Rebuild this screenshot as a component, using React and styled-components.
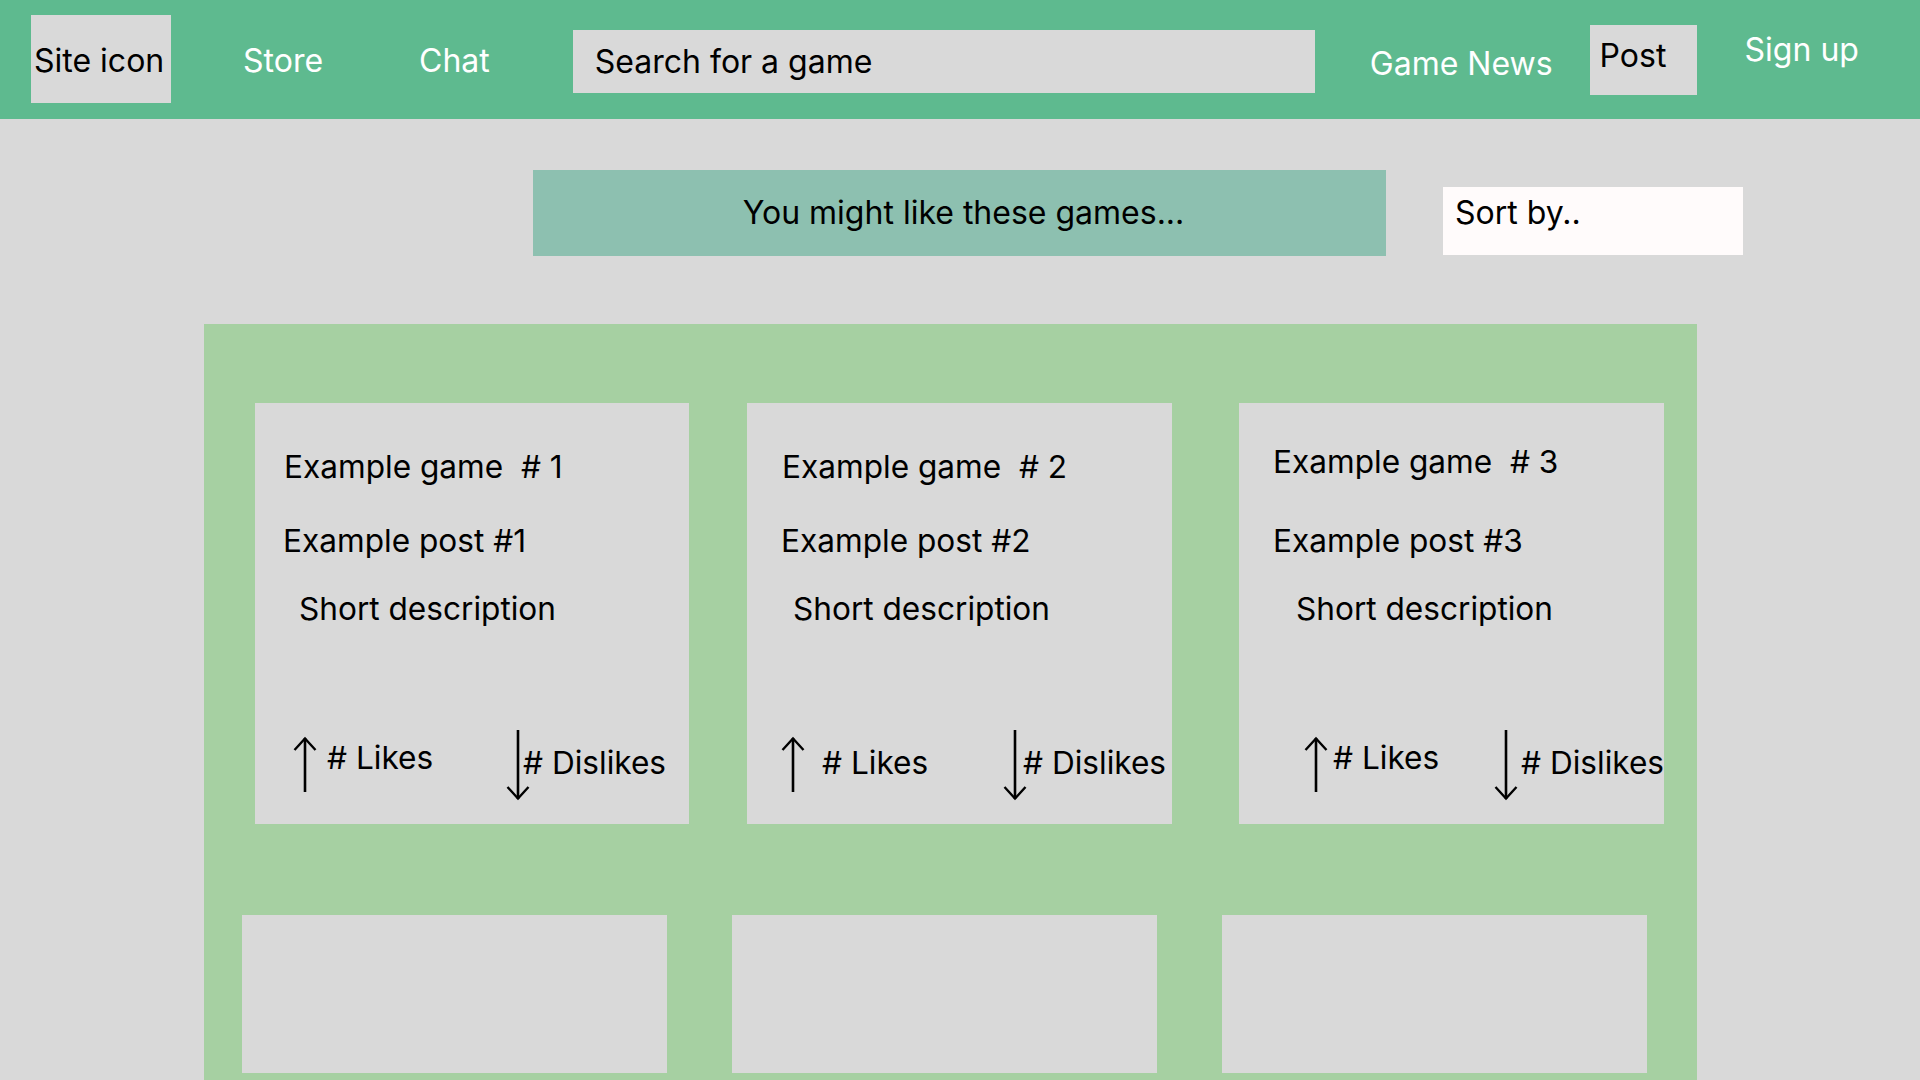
import React from "react";
import styled, { createGlobalStyle } from "styled-components";

const Global = createGlobalStyle`
  html, body { margin: 0; padding: 0; overflow: hidden; }
  body {
    background: #d9d9d9;
    font-family: Inter, "Noto Sans", "Liberation Sans", sans-serif;
    color: #000;
  }
  * { box-sizing: border-box; }
`;

const Page = styled.div`
  width: 1920px;
  height: 1080px;
  overflow: hidden;
  background: #d9d9d9;
`;

const Header = styled.header`
  display: flex;
  align-items: flex-start;
  height: 119px;
  padding-left: 31px;
  background: #5eba8f;
`;

const LogoBox = styled.div`
  display: flex;
  align-items: center;
  margin-top: 15px;
  width: 140px;
  height: 88px;
  padding: 3px 0 0 3px;
  background: #d9d9d9;
  font-size: 32px;
  line-height: 32px;
  white-space: nowrap;
`;

const NavLink = styled.a`
  margin-top: ${(p) => p.$top}px;
  margin-left: ${(p) => p.$ml}px;
  color: #ffffff;
  font-size: 32px;
  line-height: 32px;
  white-space: nowrap;
  text-decoration: none;
`;

const SearchBox = styled.div`
  display: flex;
  align-items: center;
  margin: 30px 0 0 ${(p) => p.$ml}px;
  width: 742px;
  height: 63px;
  padding-left: 22px;
  background: #d9d9d9;
  font-size: 32px;
  line-height: 32px;
`;

const PostButton = styled.div`
  margin: 25px 0 0 ${(p) => p.$ml}px;
  width: 107px;
  height: 70px;
  padding: 15px 0 0 10px;
  background: #d9d9d9;
  font-size: 32px;
  line-height: 32px;
`;

const BannerRow = styled.div`
  display: flex;
  align-items: flex-start;
  gap: 57px;
  padding: 51px 0 0 533px;
`;

const Banner = styled.div`
  display: flex;
  align-items: center;
  justify-content: center;
  width: 853px;
  height: 86px;
  padding-left: 8px;
  background: #8dc0b0;
  font-size: 32px;
  line-height: 32px;
`;

const SortBox = styled.div`
  margin-top: 17px;
  width: 300px;
  height: 68px;
  padding: 10px 12px;
  background: #fffbfb;
  font-size: 32px;
  line-height: 32px;
`;

const Board = styled.section`
  margin: 68px 0 0 204px;
  width: 1493px;
  padding: 79px 0 200px;
  background: #a6d0a2;
`;

const CardRow = styled.div`
  display: flex;
  align-items: flex-start;
  margin-top: ${(p) => p.$mt || 0}px;
`;

const Card = styled.article`
  display: flex;
  flex-direction: column;
  align-items: flex-start;
  margin-left: ${(p) => p.$ml}px;
  width: ${(p) => p.$w}px;
  height: ${(p) => p.$h}px;
  background: #d9d9d9;
`;

const CardLine = styled.div`
  margin: ${(p) => p.$mt}px 0 0 ${(p) => p.$x}px;
  font-size: 31.6px;
  line-height: 30px;
  white-space: pre;
`;

const VoteRow = styled.div`
  display: flex;
  align-items: flex-start;
  margin-top: 106.5px;
`;

const VoteGroup = styled.div`
  display: flex;
  align-items: flex-start;
  margin-left: ${(p) => p.$ml || 0}px;
  width: ${(p) => (p.$w ? `${p.$w}px` : "auto")};
`;

const VoteLabel = styled.span`
  margin: ${(p) => p.$mt}px 0 0 ${(p) => p.$gap}px;
  font-size: 31.6px;
  line-height: 30px;
  white-space: pre;
`;

const ArrowSvg = styled.svg`
  display: block;
  flex: none;
  margin-top: ${(p) => p.$mt}px;
  overflow: visible;
`;

const UpArrow = ({ mt }) => (
  <ArrowSvg $mt={mt} width="22" height="56" viewBox="0 0 22 56">
    <line x1="11" y1="1" x2="11" y2="55" stroke="#000" strokeWidth="2.6" />
    <polyline points="0.5,13 11,1.5 21.5,13" fill="none" stroke="#000" strokeWidth="2.4" />
  </ArrowSvg>
);

const DownArrow = ({ mt }) => (
  <ArrowSvg $mt={mt} width="22" height="70" viewBox="0 0 22 70">
    <line x1="11" y1="0" x2="11" y2="69" stroke="#000" strokeWidth="2.6" />
    <polyline points="0.5,57 11,68.5 21.5,57" fill="none" stroke="#000" strokeWidth="2.4" />
  </ArrowSvg>
);

const cards = [
  {
    n: 1, ml: 51, w: 434,
    titleX: 29, titleMt: 49, postX: 28, postMt: 43.5, descX: 44,
    upMl: 39, upW: 213, likesGap: 11, likesMt: 13, dislikesGap: -6,
  },
  {
    n: 2, ml: 58, w: 425,
    titleX: 35, titleMt: 49, postX: 34, postMt: 43.5, descX: 46,
    upMl: 35, upW: 222, likesGap: 18, likesMt: 18, dislikesGap: -3,
  },
  {
    n: 3, ml: 67, w: 425,
    titleX: 34, titleMt: 43.5, postX: 34, postMt: 49, descX: 57,
    upMl: 66, upW: 190, likesGap: 6, likesMt: 13, dislikesGap: 4,
  },
];

export default function App() {
  return (
    <Page>
      <Global />
      <Header>
        <LogoBox>Site icon</LogoBox>
        <NavLink $ml={72} $top={45}>Store</NavLink>
        <NavLink $ml={96} $top={45}>Chat</NavLink>
        <SearchBox $ml={83}>Search for a game</SearchBox>
        <NavLink $ml={55} $top={47.5}>Game News</NavLink>
        <PostButton $ml={37}>Post</PostButton>
        <NavLink $ml={48} $top={33.5}>Sign up</NavLink>
      </Header>

      <BannerRow>
        <Banner>You might like these games...</Banner>
        <SortBox>Sort by..</SortBox>
      </BannerRow>

      <Board>
        <CardRow>
          {cards.map((c) => (
            <Card key={c.n} $ml={c.ml} $w={c.w} $h={421}>
              <CardLine $x={c.titleX} $mt={c.titleMt}>{`Example game  # ${c.n}`}</CardLine>
              <CardLine $x={c.postX} $mt={c.postMt}>{`Example post #${c.n}`}</CardLine>
              <CardLine $x={c.descX} $mt={38}>Short description</CardLine>
              <VoteRow>
                <VoteGroup $ml={c.upMl} $w={c.upW}>
                  <UpArrow mt={7} />
                  <VoteLabel $gap={c.likesGap} $mt={c.likesMt}># Likes</VoteLabel>
                </VoteGroup>
                <VoteGroup>
                  <DownArrow mt={0} />
                  <VoteLabel $gap={c.dislikesGap} $mt={18}># Dislikes</VoteLabel>
                </VoteGroup>
              </VoteRow>
            </Card>
          ))}
        </CardRow>
        <CardRow $mt={91}>
          <Card $ml={38} $w={425} $h={158} />
          <Card $ml={65} $w={425} $h={158} />
          <Card $ml={65} $w={425} $h={158} />
        </CardRow>
      </Board>
    </Page>
  );
}
